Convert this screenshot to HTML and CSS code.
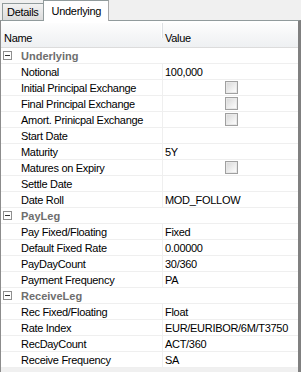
FILE: index.html
```html
<!DOCTYPE html>
<html lang="en">
<head>
    <meta charset="UTF-8">
    <meta name="viewport" content="width=device-width, initial-scale=1.0">
    <title>Property Grid</title>
    <link rel="stylesheet" href="styles.css">
</head>
<body>

    <div class="tabs">
        <div class="tab">Details</div>
        <div class="tab selected">Underlying</div>
    </div>

    <div class="panel">
        <div class="grid">
            <div class="header">
                <div class="name">Name</div>
                <div class="value">Value</div>
            </div>

            <div class="group"><span class="toggle"></span>Underlying</div>
            <div class="row"><div class="name">Notional</div><div class="value">100,000</div></div>
            <div class="row"><div class="name">Initial Principal Exchange</div><div class="value center"><span class="check"></span></div></div>
            <div class="row"><div class="name">Final Principal Exchange</div><div class="value center"><span class="check"></span></div></div>
            <div class="row"><div class="name">Amort. Prinicpal Exchange</div><div class="value center"><span class="check"></span></div></div>
            <div class="row"><div class="name">Start Date</div><div class="value"></div></div>
            <div class="row"><div class="name">Maturity</div><div class="value">5Y</div></div>
            <div class="row"><div class="name">Matures on Expiry</div><div class="value center"><span class="check"></span></div></div>
            <div class="row"><div class="name">Settle Date</div><div class="value"></div></div>
            <div class="row"><div class="name">Date Roll</div><div class="value">MOD_FOLLOW</div></div>

            <div class="group"><span class="toggle"></span>PayLeg</div>
            <div class="row"><div class="name">Pay Fixed/Floating</div><div class="value">Fixed</div></div>
            <div class="row"><div class="name">Default Fixed Rate</div><div class="value">0.00000</div></div>
            <div class="row"><div class="name">PayDayCount</div><div class="value">30/360</div></div>
            <div class="row"><div class="name">Payment Frequency</div><div class="value">PA</div></div>

            <div class="group"><span class="toggle"></span>ReceiveLeg</div>
            <div class="row"><div class="name">Rec Fixed/Floating</div><div class="value">Float</div></div>
            <div class="row"><div class="name">Rate Index</div><div class="value">EUR/EURIBOR/6M/T3750</div></div>
            <div class="row"><div class="name">RecDayCount</div><div class="value">ACT/360</div></div>
            <div class="row"><div class="name">Receive Frequency</div><div class="value">SA</div></div>
        </div>
    </div>

</body>
</html>
```

FILE: styles.css
```css
body {
    margin: 0;
    padding: 0;
    width: 301px;
    height: 372px;
    overflow: hidden;
    background-color: #f0f0f0;
    font-family: "Liberation Sans", Arial, sans-serif;
    font-size: 11px;
    letter-spacing: -0.3px;
    color: #000;
}

.tabs {
    display: flex;
    align-items: flex-end;
    height: 20px;
    padding-left: 2px;
}

.tab {
    box-sizing: border-box;
    height: 17px;
    padding: 0 4px;
    line-height: 17px;
    border: 1px solid #919b9c;
    border-bottom: none;
    background: linear-gradient(#f2f2f2, #dcdcdc);
    color: #000;
}

.tab.selected {
    position: relative;
    z-index: 1;
    height: 21px;
    margin-bottom: -1px;
    margin-left: -1px;
    padding: 0 7px 0 8px;
    line-height: 20px;
    background: #fff;
    border-right-color: #a8a8a8;
}

.panel {
    box-sizing: border-box;
    height: 352px;
    border-top: 1px solid #919b9c;
    border-left: 1px solid #8c8c8c;
    border-right: 3px solid #808080;
    background: #f0f0f0;
}

.grid {
    background: #fff;
    padding-top: 2px;
}

.header {
    display: flex;
    box-sizing: border-box;
    height: 25px;
    padding-top: 9px;
    background: linear-gradient(#fdfdfd, #eef0f2);
    border-bottom: 1px solid #dcdcdc;
}

.header .name {
    padding-left: 3px;
}

.header .value {
    border-left: 1px solid #dde0e3;
    box-shadow: -1px 0 0 #fff;
    margin-top: -9px;
    padding-top: 9px;
    align-items: flex-start;
}

.row, .group {
    display: flex;
    align-items: center;
    box-sizing: border-box;
    height: 16px;
    border-bottom: 1px solid #efefef;
}

.name {
    box-sizing: border-box;
    width: 161px;
    padding-left: 20px;
    white-space: nowrap;
    overflow: hidden;
}

.value {
    box-sizing: border-box;
    flex: 1;
    height: 100%;
    display: flex;
    align-items: center;
    padding-left: 2px;
    border-left: 1px solid #efefef;
    white-space: nowrap;
}

.value.center {
    justify-content: center;
    padding-left: 0;
    padding-right: 0;
}

.group {
    padding-left: 2px;
    font-weight: bold;
    color: #6e6e6e;
    letter-spacing: 0;
}

.toggle {
    position: relative;
    box-sizing: border-box;
    width: 9px;
    height: 9px;
    margin-right: 9px;
    border: 1px solid #8f8f8f;
    background: #fff;
}

.toggle::after {
    content: "";
    position: absolute;
    left: 1px;
    top: 3px;
    width: 5px;
    height: 1px;
    background: #333;
}

.check {
    box-sizing: border-box;
    width: 13px;
    height: 13px;
    margin-left: 2px;
    border: 1px solid #a0a0a0;
    background: linear-gradient(135deg, #d6d6d6, #f4f4f4 70%, #fff);
    box-shadow: inset 0 0 0 1px #e8e8e8;
}
```
